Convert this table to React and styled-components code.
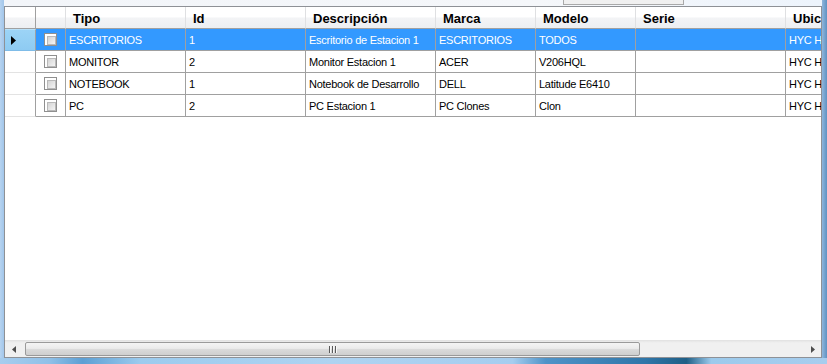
import React from "react";
import styled, { createGlobalStyle, css } from "styled-components";

const GlobalStyle = createGlobalStyle`
  html, body {
    margin: 0;
    padding: 0;
    width: 827px;
    height: 364px;
    overflow: hidden;
    background: #a9cbee;
  }
  * {
    box-sizing: border-box;
  }
`;

const Window = styled.div`
  width: 827px;
  height: 364px;
  display: flex;
  flex-direction: column;
`;

const Body = styled.div`
  flex: 1;
  display: flex;
  min-height: 0;
`;

const LeftEdge = styled.div`
  width: 4px;
  background: linear-gradient(to right, #b6d3f0, #a2c6ea);
`;

const RightEdge = styled.div`
  width: 5px;
  background: linear-gradient(to right, #8fb6dc, #5f92c2);
`;

const BottomEdge = styled.div`
  height: 6px;
  background: linear-gradient(
    to right,
    #a7cdee 0%,
    #8fc0e8 6%,
    #5c9fd4 10%,
    #9ccbee 17%,
    #aed3f1 40%,
    #a5cdef 62%,
    #4f93c8 66%,
    #2f76a9 78%,
    #1f5f86 83%,
    #9ccaec 86%,
    #a7cdee 100%
  );
`;

const Main = styled.div`
  flex: 1;
  display: flex;
  flex-direction: column;
  min-width: 0;
`;

const TopStrip = styled.div`
  height: 6px;
  display: flex;
  align-items: flex-end;
  background: linear-gradient(to right, #f2f5f9 0%, #f5f7fa 65%, #edf4fc 100%);
`;

const SearchBox = styled.div`
  margin-left: 559px;
  width: 121px;
  height: 6px;
  margin-bottom: 1px;
  border: 1px solid #a9a9a9;
  border-top: none;
  background: #f0f0f0;
`;

const Grid = styled.div`
  flex: 1;
  display: flex;
  flex-direction: column;
  border: 1px solid #8e9196;
  background: #ffffff;
  min-height: 0;
`;

const Rows = styled.div`
  flex: 1;
  overflow: hidden;
  font-family: "Liberation Sans", Arial, sans-serif;
  font-size: 11px;
  letter-spacing: -0.25px;
  color: #000000;
`;

const Row = styled.div`
  display: grid;
  grid-template-columns: ${(p) => p.$template};
  height: 22px;
  width: max-content;
  background: ${(p) => (p.$selected ? "#3399ff" : "#ffffff")};
  color: ${(p) => (p.$selected ? "#ffffff" : "#000000")};
`;

const HeaderRow = styled(Row)`
  background: linear-gradient(to bottom, #ffffff 0%, #ffffff 45%, #f3f4f6 50%, #eceef1 100%);
  color: #000000;
`;

const Cell = styled.div`
  height: 22px;
  display: flex;
  align-items: center;
  padding-left: 3px;
  white-space: nowrap;
  overflow: hidden;
  border-right: 1px solid #a0a0a0;
  border-bottom: 1px solid #a0a0a0;
`;

const HeaderCell = styled(Cell)`
  padding-left: 7px;
  padding-top: 1px;
  font-size: 13px;
  font-weight: bold;
  letter-spacing: 0;
  border-right-color: ${(p) => (p.$strong ? "#a0a0a0" : "#dfe0e2")};
  border-bottom-color: #a0a0a0;
`;

const RowHeader = styled(Cell)`
  padding-left: 6px;
  ${(p) =>
    p.$current
      ? css`
          background: linear-gradient(to bottom, #9cd4f6, #8ecbf2);
          border-top: 1px solid #b7e1fa;
          border-bottom: 1px solid #7fbce8;
        `
      : css`
          background: #ffffff;
          border-bottom-color: #e3e3e3;
        `}
`;

const CheckCell = styled(Cell)`
  justify-content: center;
  padding-left: 0;
`;

const CheckBox = styled.span`
  width: 13px;
  height: 13px;
  border: 1px solid #8f8f8f;
  background: #ffffff;
  padding: 2px;
  display: block;

  &::after {
    content: "";
    display: block;
    width: 7px;
    height: 7px;
    border: 1px solid #b9b9b9;
    background: linear-gradient(135deg, #d4d4d4, #f4f4f4);
  }
`;

const ScrollBar = styled.div`
  height: 17px;
  display: flex;
  align-items: center;
  background: linear-gradient(to bottom, #e6e6e6 0%, #f0f0f0 12%, #f0f0f0 100%);
  border-top: 1px solid #e3e3e3;
`;

const ArrowButton = styled.div`
  width: 17px;
  height: 16px;
  display: flex;
  align-items: center;
  justify-content: center;
`;

const Thumb = styled.div`
  margin-left: 3px;
  width: 615px;
  height: 14px;
  border: 1px solid #9a9a9a;
  border-radius: 2px;
  background: linear-gradient(to bottom, #f4f4f4 0%, #ebebeb 45%, #d9d9d9 55%, #cfcfcf 100%);
  display: flex;
  align-items: center;
  justify-content: center;
  gap: 1px;
`;

const Grip = styled.span`
  width: 1px;
  height: 7px;
  background: #5a5a5a;
  box-shadow: 1px 0 0 #f8f8f8;
  margin-right: 1px;
`;

const Spacer = styled.div`
  flex: 1;
`;

const columns = [
  { key: "tipo", label: "Tipo", width: 120 },
  { key: "id", label: "Id", width: 120 },
  { key: "desc", label: "Descripción", width: 130 },
  { key: "marca", label: "Marca", width: 100 },
  { key: "modelo", label: "Modelo", width: 100 },
  { key: "serie", label: "Serie", width: 150 },
  { key: "ubic", label: "Ubicación", width: 120 },
];

const equipos = [
  { tipo: "ESCRITORIOS", id: 1, desc: "Escritorio de Estacion 1", marca: "ESCRITORIOS", modelo: "TODOS", serie: "", ubic: "HYC Hermosillo" },
  { tipo: "MONITOR", id: 2, desc: "Monitor Estacion 1", marca: "ACER", modelo: "V206HQL", serie: "", ubic: "HYC Hermosillo" },
  { tipo: "NOTEBOOK", id: 1, desc: "Notebook de Desarrollo", marca: "DELL", modelo: "Latitude E6410", serie: "", ubic: "HYC Hermosillo" },
  { tipo: "PC", id: 2, desc: "PC Estacion 1", marca: "PC Clones", modelo: "Clon", serie: "", ubic: "HYC Hermosillo" },
];

const template = ["31px", "30px", ...columns.map((c) => `${c.width}px`)].join(" ");

const CurrentMark = () => (
  <svg width="5" height="9" viewBox="0 0 5 9">
    <path d="M0 0 L5 4.5 L0 9 Z" fill="#000" />
  </svg>
);

const LeftArrow = () => (
  <svg width="4" height="7" viewBox="0 0 4 7">
    <path d="M4 0 L0 3.5 L4 7 Z" fill="#4d4d4d" />
  </svg>
);

const RightArrow = () => (
  <svg width="4" height="7" viewBox="0 0 4 7">
    <path d="M0 0 L4 3.5 L0 7 Z" fill="#4d4d4d" />
  </svg>
);

const App = () => {
  const selected = 0;

  return (
    <Window>
      <GlobalStyle />
      <Body>
        <LeftEdge />
        <Main>
          <TopStrip>
            <SearchBox />
          </TopStrip>
          <Grid>
            <Rows>
              <HeaderRow $template={template}>
                <HeaderCell $strong />
                <HeaderCell />
                {columns.map((c) => (
                  <HeaderCell key={c.key}>{c.label}</HeaderCell>
                ))}
              </HeaderRow>
              {equipos.map((e, i) => (
                <Row key={i} $template={template} $selected={i === selected}>
                  <RowHeader $current={i === selected}>
                    {i === selected && <CurrentMark />}
                  </RowHeader>
                  <CheckCell>
                    <CheckBox />
                  </CheckCell>
                  {columns.map((c) => (
                    <Cell key={c.key}>{e[c.key]}</Cell>
                  ))}
                </Row>
              ))}
            </Rows>
            <ScrollBar>
              <ArrowButton>
                <LeftArrow />
              </ArrowButton>
              <Thumb>
                <Grip />
                <Grip />
                <Grip />
              </Thumb>
              <Spacer />
              <ArrowButton>
                <RightArrow />
              </ArrowButton>
            </ScrollBar>
          </Grid>
        </Main>
        <RightEdge />
      </Body>
      <BottomEdge />
    </Window>
  );
};

export default App;
